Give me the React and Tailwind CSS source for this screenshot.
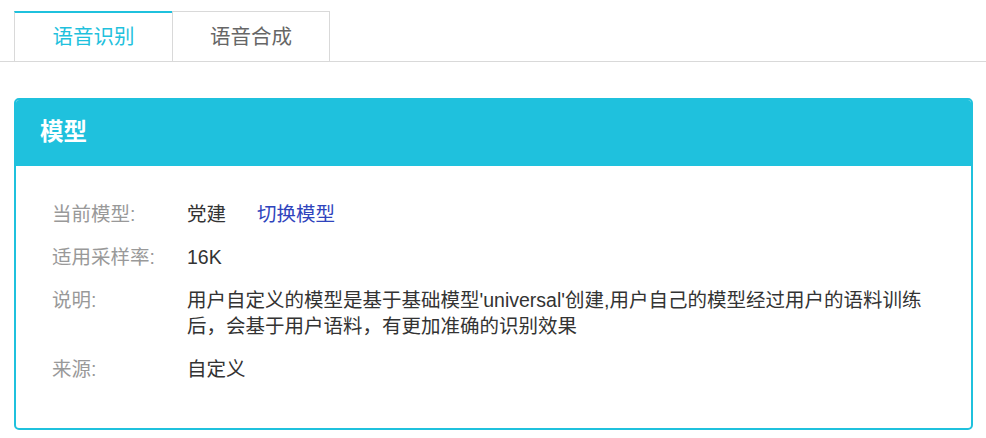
function Row({ label, children }) {
  return (
    <div className="flex">
      <div className="w-[135px] shrink-0 text-[#999]">{label}</div>
      <div className="w-[760px] text-[#333]">{children}</div>
    </div>
  )
}

export default function App() {
  return (
    <main
      className="min-h-screen w-[986px] bg-white"
      style={{ fontFamily: '"Liberation Sans", "Noto Sans CJK SC", sans-serif' }}
    >
      <nav className="flex border-b border-[#d9d9d9] pl-[14px] pt-[11px]">
        <button
          type="button"
          className="h-[50px] w-[158px] border-l border-t-2 border-[#d9d9d9] border-t-[#1fc1dd] bg-white text-[20.5px] text-[#1fc1dd]"
        >
          语音识别
        </button>
        <button
          type="button"
          className="h-[50px] w-[158px] border-x border-t border-[#d9d9d9] bg-white pt-[1px] text-[20.5px] text-[#666]"
        >
          语音合成
        </button>
      </nav>

      <section className="ml-[14px] mr-[13px] mt-[36px] overflow-hidden rounded-[5px] border-2 border-[#1fc1dd]">
        <header className="flex h-[66px] items-center bg-[#1fc1dd] pl-[24px]">
          <h2 className="text-[23.5px] font-bold text-white">模型</h2>
        </header>
        <div className="flex flex-col gap-[17px] pb-[46px] pl-[36px] pt-[35px] text-[19.5px] leading-[26px]">
          <Row label="当前模型:">
            党建
            <a href="#" className="ml-[31px] text-[#2f44bd] no-underline">
              切换模型
            </a>
          </Row>
          <Row label="适用采样率:">16K</Row>
          <Row label="说明:">
            用户自定义的模型是基于基础模型'universal'创建,用户自己的模型经过用户的语料训练后，会基于用户语料，有更加准确的识别效果
          </Row>
          <Row label="来源:">自定义</Row>
        </div>
      </section>
    </main>
  )
}
